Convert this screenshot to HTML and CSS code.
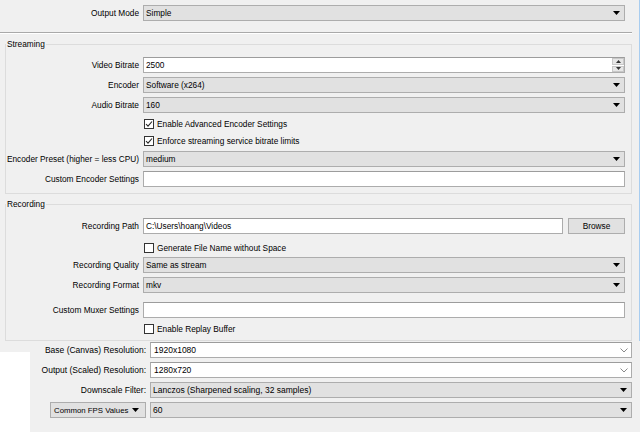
FILE: index.html
```html
<!DOCTYPE html>
<html>
<head>
<meta charset="utf-8">
<link rel="stylesheet" href="styles.css">
</head>
<body>
<div class="top">
  <div class="row mode-row">
    <span class="lbl">Output Mode</span>
    <div class="combo"><span>Simple</span><svg class="arrow" width="7" height="4" viewBox="0 0 7 4"><path d="M0 0H7L3.5 4Z"/></svg></div>
  </div>
  <div class="sep"></div>

  <section class="group streaming">
    <div class="legend">Streaming</div>
    <div class="stack">
      <div class="row">
        <span class="lbl">Video Bitrate</span>
        <div class="input spin"><span>2500</span>
          <span class="spin-btns">
            <span class="spin-btn"><svg width="5" height="3" viewBox="0 0 5 3"><path d="M0 3H5L2.5 0Z"/></svg></span>
            <span class="spin-btn"><svg width="5" height="3" viewBox="0 0 5 3"><path d="M0 0H5L2.5 3Z"/></svg></span>
          </span>
        </div>
      </div>
      <div class="row">
        <span class="lbl">Encoder</span>
        <div class="combo"><span>Software (x264)</span><svg class="arrow" width="7" height="4" viewBox="0 0 7 4"><path d="M0 0H7L3.5 4Z"/></svg></div>
      </div>
      <div class="row">
        <span class="lbl">Audio Bitrate</span>
        <div class="combo"><span>160</span><svg class="arrow" width="7" height="4" viewBox="0 0 7 4"><path d="M0 0H7L3.5 4Z"/></svg></div>
      </div>
      <div class="row ck-row">
        <span></span>
        <label class="check"><span class="box"><svg width="8" height="8" viewBox="0 0 8 8"><path d="M1 4L3 6.2L7 1.5" fill="none" stroke="#222" stroke-width="1.1"/></svg></span>Enable Advanced Encoder Settings</label>
      </div>
      <div class="row ck-row">
        <span></span>
        <label class="check"><span class="box"><svg width="8" height="8" viewBox="0 0 8 8"><path d="M1 4L3 6.2L7 1.5" fill="none" stroke="#222" stroke-width="1.1"/></svg></span>Enforce streaming service bitrate limits</label>
      </div>
      <div class="row">
        <span class="lbl">Encoder Preset (higher = less CPU)</span>
        <div class="combo"><span>medium</span><svg class="arrow" width="7" height="4" viewBox="0 0 7 4"><path d="M0 0H7L3.5 4Z"/></svg></div>
      </div>
      <div class="row">
        <span class="lbl">Custom Encoder Settings</span>
        <div class="input"></div>
      </div>
    </div>
  </section>

  <section class="group recording">
    <div class="legend">Recording</div>
    <div class="row">
      <span class="lbl">Recording Path</span>
      <div class="path-field">
        <div class="input path-input">C:\Users\hoang\Videos</div>
        <div class="button">Browse</div>
      </div>
    </div>
    <div class="row ck-row mt7">
      <span></span>
      <label class="check"><span class="box"></span>Generate File Name without Space</label>
    </div>
    <div class="row mt3">
      <span class="lbl">Recording Quality</span>
      <div class="combo"><span>Same as stream</span><svg class="arrow" width="7" height="4" viewBox="0 0 7 4"><path d="M0 0H7L3.5 4Z"/></svg></div>
    </div>
    <div class="row mt4">
      <span class="lbl">Recording Format</span>
      <div class="combo"><span>mkv</span><svg class="arrow" width="7" height="4" viewBox="0 0 7 4"><path d="M0 0H7L3.5 4Z"/></svg></div>
    </div>
    <div class="row mt9">
      <span class="lbl">Custom Muxer Settings</span>
      <div class="input"></div>
    </div>
    <div class="row ck-row mt4">
      <span></span>
      <label class="check"><span class="box"></span>Enable Replay Buffer</label>
    </div>
  </section>
</div>

<div class="bottom">
  <div class="gutter"><div class="gutter-top"></div><div class="gutter-rest"></div></div>
  <div class="panel2">
    <div class="row2">
      <span class="lbl">Base (Canvas) Resolution:</span>
      <div class="input edit-combo"><span>1920x1080</span><svg class="chev" width="8" height="5" viewBox="0 0 8 5"><path d="M0.5 0.5L4 4L7.5 0.5" fill="none" stroke="#8a8a8a" stroke-width="1"/></svg></div>
    </div>
    <div class="row2">
      <span class="lbl">Output (Scaled) Resolution:</span>
      <div class="input edit-combo"><span>1280x720</span><svg class="chev" width="8" height="5" viewBox="0 0 8 5"><path d="M0.5 0.5L4 4L7.5 0.5" fill="none" stroke="#8a8a8a" stroke-width="1"/></svg></div>
    </div>
    <div class="row2">
      <span class="lbl">Downscale Filter:</span>
      <div class="combo"><span>Lanczos (Sharpened scaling, 32 samples)</span><svg class="arrow" width="7" height="4" viewBox="0 0 7 4"><path d="M0 0H7L3.5 4Z"/></svg></div>
    </div>
    <div class="row2">
      <div class="combo fps-combo"><span>Common FPS Values</span><svg class="arrow" width="7" height="4" viewBox="0 0 7 4"><path d="M0 0H7L3.5 4Z"/></svg></div>
      <div class="combo"><span>60</span><svg class="arrow" width="7" height="4" viewBox="0 0 7 4"><path d="M0 0H7L3.5 4Z"/></svg></div>
    </div>
  </div>
</div>
</body>
</html>
```

FILE: styles.css
```css
* { box-sizing: border-box; }
html, body { margin: 0; padding: 0; }
body {
  width: 640px;
  height: 432px;
  overflow: hidden;
  background: #f0f0f0;
  font-family: "Liberation Sans", Arial, sans-serif;
  font-size: 8.3px;
  color: #000;
}

.top {
  width: 640px;
  height: 341px;
  padding-top: 5px;
  border-right: 1px solid #a8cdf0;
  overflow: hidden;
}

.row {
  display: grid;
  grid-template-columns: 133px 482px;
  column-gap: 4px;
  align-items: center;
  height: 16px;
}
.ck-row { height: 13px; }

.mode-row { margin-left: 6px; }

.lbl { text-align: right; white-space: nowrap; }

.sep {
  width: 632px;
  margin-top: 11px;
  border-top: 1px solid #a9a9a9;
  border-bottom: 1px solid #ffffff;
}

.combo {
  height: 16px;
  background: #e1e1e1;
  border: 1px solid #adadad;
  display: flex;
  align-items: center;
  justify-content: space-between;
  padding: 0 4px 0 2px;
  white-space: nowrap;
}
.arrow { flex: none; fill: #000; }

.input {
  height: 16px;
  background: #fff;
  border: 1px solid #acacac;
  border-top-color: #9c9c9c;
  display: flex;
  align-items: center;
  padding: 0 2px;
  white-space: nowrap;
}

.spin { justify-content: space-between; padding-right: 0; }
.spin-btns {
  width: 12px;
  height: 14px;
  display: flex;
  flex-direction: column;
  gap: 1px;
}
.spin-btn {
  flex: 1;
  display: flex;
  align-items: center;
  justify-content: center;
  background: #e6e6e6;
  border: 1px solid #c8c8c8;
}
.spin-btn svg { fill: #333; }

.group {
  position: relative;
  margin-left: 5px;
  width: 627px;
  border: 1px solid #dcdcdc;
  padding: 12px 6px 6px 0;
}
.streaming { margin-top: 10px; }
.recording { margin-top: 10px; padding-top: 13px; padding-bottom: 5px; }

.legend {
  position: absolute;
  top: -6px;
  left: 0;
  padding: 0 1px;
  line-height: 10px;
  background: #f0f0f0;
}

.stack { display: flex; flex-direction: column; gap: 4px; }

.mt3 { margin-top: 3px; }
.mt4 { margin-top: 4px; }
.mt7 { margin-top: 7px; }
.mt9 { margin-top: 9px; }

.check {
  display: flex;
  align-items: center;
  gap: 3px;
  margin-left: 1px;
  white-space: nowrap;
}
.box {
  width: 10px;
  height: 10px;
  background: #fff;
  border: 1px solid #333;
  display: flex;
  align-items: center;
  justify-content: center;
}

.path-field { display: flex; gap: 5px; }
.path-input { flex: 1; }
.button {
  width: 57px;
  height: 16px;
  background: #e1e1e1;
  border: 1px solid #adadad;
  display: flex;
  align-items: center;
  justify-content: center;
}

.bottom { display: flex; height: 91px; }
.gutter { width: 30px; display: flex; flex-direction: column; }
.gutter-top { height: 11px; background: #f0f0f0; }
.gutter-rest { flex: 1; background: #fff; }

.panel2 {
  width: 610px;
  padding-top: 1px;
  display: flex;
  flex-direction: column;
  gap: 4px;
  font-size: 8.5px;
}
.row2 {
  display: grid;
  grid-template-columns: 116px 482px;
  column-gap: 4px;
  align-items: center;
  height: 16px;
}
.edit-combo { justify-content: space-between; padding: 0 3px 0 3px; }
.chev { flex: none; }
.fps-combo {
  width: 96px;
  justify-self: end;
  padding-left: 3px;
  padding-right: 6px;
  font-size: 7.8px;
}
```
